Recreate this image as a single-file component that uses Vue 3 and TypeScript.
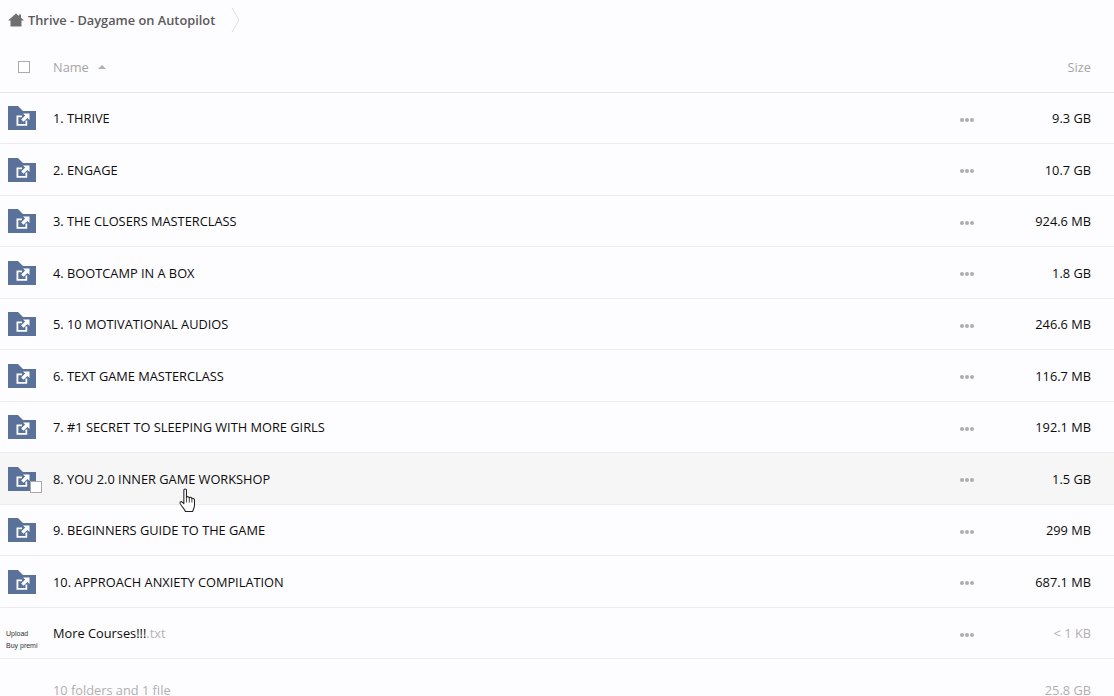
<script setup lang="ts">
interface Row { name: string; size: string }
const rows: Row[] = [
  { name: '1. THRIVE', size: '9.3 GB' },
  { name: '2. ENGAGE', size: '10.7 GB' },
  { name: '3. THE CLOSERS MASTERCLASS', size: '924.6 MB' },
  { name: '4. BOOTCAMP IN A BOX', size: '1.8 GB' },
  { name: '5. 10 MOTIVATIONAL AUDIOS', size: '246.6 MB' },
  { name: '6. TEXT GAME MASTERCLASS', size: '116.7 MB' },
  { name: '7. #1 SECRET TO SLEEPING WITH MORE GIRLS', size: '192.1 MB' },
  { name: '8. YOU 2.0 INNER GAME WORKSHOP', size: '1.5 GB' },
  { name: '9. BEGINNERS GUIDE TO THE GAME', size: '299 MB' },
  { name: '10. APPROACH ANXIETY COMPILATION', size: '687.1 MB' },
]
</script>

<template>
  <div class="page">
    <nav class="crumbs">
      <svg class="home" width="16" height="14" viewBox="0 0 16 14">
        <path d="M8 0.5 L11 3 V1.5 H13 V4.7 L16 7.5 H13.5 V13.5 H2.5 V7.5 H0 Z" fill="#6f6f6f" />
      </svg>
      <span class="crumb">Thrive - Daygame on Autopilot</span>
      <svg class="chev" width="9" height="26" viewBox="0 0 9 26">
        <path d="M1 1 L8 13 L1 25" fill="none" stroke="#dedede" stroke-width="1" />
      </svg>
    </nav>
    <header class="head">
      <div class="head-check"><span class="box"></span></div>
      <div class="head-name">Name <span class="caret"></span></div>
      <div class="head-size">Size</div>
    </header>
    <div v-for="(r, i) in rows" :key="r.name" class="row" :class="{ hover: i === 7 }">
      <div class="icon">
        <svg width="28" height="24" viewBox="0 0 28 24">
          <path d="M0 0 H10 L15 5 H28 V24 H0 Z" fill="#5a7299" />
          <path d="M8.5 9.5 H14 V11.2 H10.3 V18 H17.5 V14.5 H19.2 V19.8 H8.5 Z" fill="#fff" />
          <path d="M15 7.5 H21.5 V14 L19.4 11.9 L15.5 15.8 L13.2 13.5 L17.1 9.6 Z" fill="#fff" />
        </svg>
        <span v-if="i === 7" class="mini"></span>
      </div>
      <div class="name">{{ r.name }}</div>
      <div class="dots"><i></i><i></i><i></i></div>
      <div class="size">{{ r.size }}</div>
      <svg v-if="i === 7" class="cursor" width="17" height="25" viewBox="0 0 16 24">
        <path d="M4.5 2 C4.5 0.6 7 0.6 7 2 V9 C7.5 8 9.5 8 9.7 9.5 C10.2 8.6 12 8.7 12.2 10.2 C12.8 9.6 14.6 9.8 14.7 11.5 V16.5 C14.7 19 13.5 20.5 13 22.5 H6 C5 20 2.5 18 1 15 C0.4 13.6 1.8 12.5 3 13.5 L4.5 15 Z" fill="#fff" stroke="#222" stroke-width="1" stroke-linejoin="round" />
        <path d="M7 9 V14 M9.7 9.5 V14 M12.2 10.2 V14" stroke="#222" stroke-width="0.8" fill="none" />
      </svg>
    </div>
    <div class="row">
      <div class="icon thumb">
        <span>Upload</span>
        <span>Buy premi</span>
      </div>
      <div class="name">More Courses!!!<span class="ext">.txt</span></div>
      <div class="dots"><i></i><i></i><i></i></div>
      <div class="size muted">&lt; 1 KB</div>
    </div>
    <div class="summary">
      <div class="icon"></div>
      <div class="name muted">10 folders and 1 file</div>
      <div class="dots"></div>
      <div class="size muted">25.8 GB</div>
    </div>
  </div>
</template>

<style>
html, body { margin: 0; background: #fdfcfe; overflow: hidden; }
</style>

<style scoped>
.page {
  width: 1114px;
  height: 696px;
  overflow: hidden;
  background: #fdfcfe;
  font-family: "Open Sans", "Liberation Sans", sans-serif;
  font-size: 12.8px;
  color: #0c0c0c;
}
.crumbs {
  height: 40px;
  display: flex;
  align-items: center;
  padding-left: 8px;
  box-sizing: border-box;
}
.home { margin-right: 4px; }
.crumb { color: #5a5a5a; font-weight: 600; font-size: 12.8px; }
.chev { margin-left: 16px; }
.head {
  height: 52.5px;
  padding-top: 2px;
  display: flex;
  align-items: center;
  border-bottom: 1px solid #e8e8ea;
  box-sizing: border-box;
  color: #a6a6a6;
}
.head-check { width: 53px; display: flex; padding-left: 18px; box-sizing: border-box; }
.box {
  width: 10px;
  height: 10px;
  border: 1px solid #aaa;
  background: #fff;
  display: block;
}
.head-name { flex: 1; display: flex; align-items: center; gap: 9px; }
.caret {
  width: 0;
  height: 0;
  border-left: 4px solid transparent;
  border-right: 4px solid transparent;
  border-bottom: 4px solid #b0b0b0;
}
.head-size { padding-right: 23px; }
.row {
  position: relative;
  height: 51.5px;
  padding-top: 0.6px;
  display: flex;
  align-items: center;
  border-bottom: 1px solid #ececee;
  box-sizing: border-box;
}
.row.hover { background: #f7f6f7; }
.icon {
  position: relative;
  width: 53px;
  flex: none;
  padding-left: 8px;
  box-sizing: border-box;
  display: flex;
}
.icon svg { display: block; }
.mini {
  position: absolute;
  left: 30px;
  top: 14px;
  width: 10px;
  height: 10px;
  background: #fff;
  border: 1px solid #aaa;
}
.thumb {
  flex-direction: column;
  padding-left: 6px;
  gap: 3px;
  font-family: "Liberation Sans", sans-serif;
  font-size: 7px;
  line-height: 9px;
  color: #333;
  overflow: hidden;
  white-space: nowrap;
  padding-top: 13px;
}
.name { width: 907px; flex: none; }
.ext { color: #b4b4b4; }
.dots {
  width: 14px;
  flex: none;
  display: flex;
  gap: 1px;
  margin-top: 3px;
}
.dots i {
  width: 4px;
  height: 4px;
  border-radius: 50%;
  background: #adadad;
  display: block;
}
.size {
  flex: 1;
  text-align: right;
  padding-right: 23px;
}
.muted { color: #b0b0b0; }
.cursor {
  position: absolute;
  left: 179px;
  top: 35px;
}
.summary {
  height: 37px;
  display: flex;
  align-items: center;
  padding-top: 25px;
  box-sizing: border-box;
}
</style>
